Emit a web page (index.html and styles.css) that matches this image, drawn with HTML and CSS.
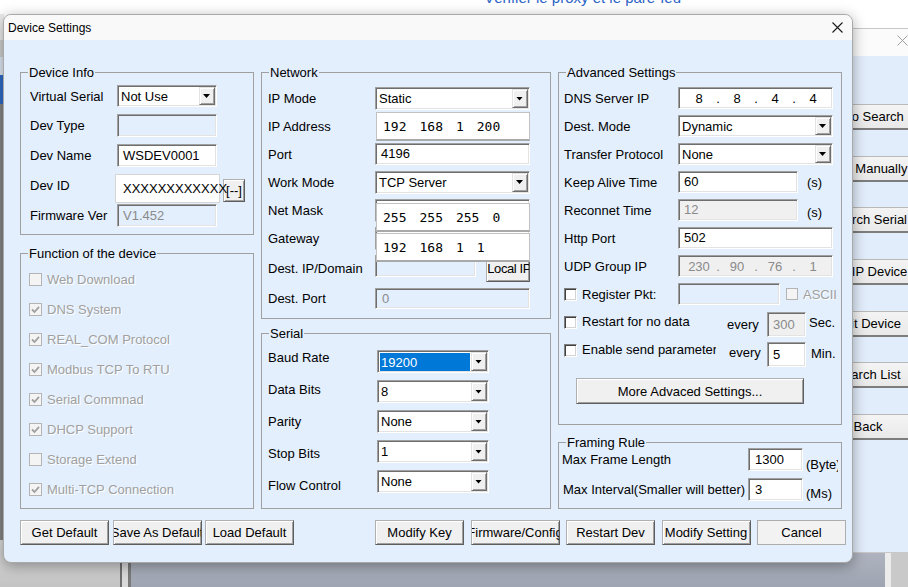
FILE: index.html
```html
<!DOCTYPE html>
<html>
<head>
<meta charset="utf-8">
<title>Device Settings</title>
<link rel="stylesheet" href="styles.css">
</head>
<body>
<div class="toplink"><span class="bullet">•</span>Vérifier le proxy et le pare-feu</div>

<div class="leftstrip"><div class="ls ls1"></div><div class="ls ls2"></div><div class="ls ls3"></div><div class="ls ls4"></div><div class="ls ls5"></div></div>

<div class="deskbottom">
  <div class="db-left"></div>
  <div class="db-frame"></div>
  <div class="db-mid"></div>
  <div class="db-right"></div>
</div>

<div class="bgwin">
  <div class="bgtitle"><svg class="bgclose" width="11" height="11" viewBox="0 0 11 11"><path d="M0.5 0.5 L10.5 10.5 M10.5 0.5 L0.5 10.5" stroke="#a0a0a0" stroke-width="1" fill="none"/></svg></div>
  <div class="bgbody">
    <div class="bgbtn">Auto Search</div>
    <div class="bgbtn">Add Manually</div>
    <div class="bgbtn">Search Serial</div>
    <div class="bgbtn">Set IP Device</div>
    <div class="bgbtn">Edit Device</div>
    <div class="bgbtn">Search List</div>
    <div class="bgbtn">Back</div>
  </div>
</div>

<div class="dialog">
  <div class="titlebar">
    <span class="title">Device Settings</span>
    <svg class="close" width="11" height="11" viewBox="0 0 11 11"><path d="M0.5 0.5 L10.5 10.5 M10.5 0.5 L0.5 10.5" stroke="#1a1a1a" stroke-width="1.1" fill="none"/></svg>
  </div>
  <div class="dbody">
    <div class="cols">
      <!-- column 1 -->
      <div class="col">
        <div class="group g-dev">
          <span class="legend">Device Info</span>
          <div class="dev-grid">
            <div class="lbl">Virtual Serial</div>
            <div class="select sel-dev"><span class="val">Not Use</span><span class="drop"></span></div>
            <div class="lbl">Dev Type</div>
            <div class="field dis fld-dev"></div>
            <div class="lbl">Dev Name</div>
            <div class="field fld-dev">WSDEV0001</div>
            <div class="lbl">Dev ID</div>
            <div class="devid-cell"><div class="devid">XXXXXXXXXXXX</div><div class="btn btn-small">[--]</div></div>
            <div class="lbl">Firmware Ver</div>
            <div class="field dis fld-dev"><span class="distext">V1.452</span></div>
          </div>
        </div>

        <div class="group g-func">
          <span class="legend">Function of the device</span>
          <div class="chkrow"><span class="cb dis"></span><span class="distxt">Web Download</span></div>
          <div class="chkrow"><span class="cb dis"><svg width="11" height="11" viewBox="0 0 11 11"><path d="M2 5.5 L4.5 8 L9 2.8" stroke="#a0a0a0" stroke-width="1.8" fill="none"/></svg></span><span class="distxt">DNS System</span></div>
          <div class="chkrow"><span class="cb dis"><svg width="11" height="11" viewBox="0 0 11 11"><path d="M2 5.5 L4.5 8 L9 2.8" stroke="#a0a0a0" stroke-width="1.8" fill="none"/></svg></span><span class="distxt">REAL_COM Protocol</span></div>
          <div class="chkrow"><span class="cb dis"><svg width="11" height="11" viewBox="0 0 11 11"><path d="M2 5.5 L4.5 8 L9 2.8" stroke="#a0a0a0" stroke-width="1.8" fill="none"/></svg></span><span class="distxt">Modbus TCP To RTU</span></div>
          <div class="chkrow"><span class="cb dis"><svg width="11" height="11" viewBox="0 0 11 11"><path d="M2 5.5 L4.5 8 L9 2.8" stroke="#a0a0a0" stroke-width="1.8" fill="none"/></svg></span><span class="distxt">Serial Commnad</span></div>
          <div class="chkrow"><span class="cb dis"><svg width="11" height="11" viewBox="0 0 11 11"><path d="M2 5.5 L4.5 8 L9 2.8" stroke="#a0a0a0" stroke-width="1.8" fill="none"/></svg></span><span class="distxt">DHCP Support</span></div>
          <div class="chkrow"><span class="cb dis"></span><span class="distxt">Storage Extend</span></div>
          <div class="chkrow"><span class="cb dis"><svg width="11" height="11" viewBox="0 0 11 11"><path d="M2 5.5 L4.5 8 L9 2.8" stroke="#a0a0a0" stroke-width="1.8" fill="none"/></svg></span><span class="distxt">Multi-TCP Connection</span></div>
        </div>
      </div>

      <!-- column 2 -->
      <div class="col">
        <div class="group g-net">
          <span class="legend">Network</span>
          <div class="net-grid">
            <div class="lbl">IP Mode</div>
            <div class="select sel-net"><span class="val">Static</span><span class="drop"></span></div>
            <div class="lbl">IP Address</div>
            <div class="ipbox ip-addr"><span>192</span><span>168</span><span>1</span><span>200</span></div>
            <div class="lbl">Port</div>
            <div class="field fld-port">4196</div>
            <div class="lbl">Work Mode</div>
            <div class="select sel-net"><span class="val">TCP Server</span><span class="drop"></span></div>
            <div class="lbl">Net Mask</div>
            <div class="field fld-net"></div>
            <div class="lbl">Gateway</div>
            <div class="field fld-net"></div>
            <div class="lbl">Dest. IP/Domain</div>
            <div class="destip-cell"><div class="field dis fld-destip"></div><div class="btn btn-localip">Local IP</div></div>
            <div class="lbl">Dest. Port</div>
            <div class="field dis fld-dport"><span class="distext">0</span></div>
          </div>
          <div class="ipbox ip-over ip-mask"><span>255</span><span>255</span><span>255</span><span>0</span></div>
          <div class="ipbox ip-over ip-gw"><span>192</span><span>168</span><span>1</span><span>1</span></div>
        </div>

        <div class="group g-ser">
          <span class="legend">Serial</span>
          <div class="ser-labels">
            <div>Baud Rate</div>
            <div>Data Bits</div>
            <div>Parity</div>
            <div>Stop Bits</div>
            <div>Flow Control</div>
          </div>
          <div class="ser-sels">
            <div class="select sel-ser"><span class="val hl">19200</span><span class="drop"></span></div>
            <div class="select sel-ser"><span class="val">8</span><span class="drop"></span></div>
            <div class="select sel-ser"><span class="val">None</span><span class="drop"></span></div>
            <div class="select sel-ser"><span class="val">1</span><span class="drop"></span></div>
            <div class="select sel-ser"><span class="val">None</span><span class="drop"></span></div>
          </div>
        </div>
      </div>

      <!-- column 3 -->
      <div class="col">
        <div class="group g-adv">
          <span class="legend">Advanced Settings</span>
          <div class="adv-grid">
            <div class="lbl">DNS Server IP</div>
            <div class="field ipf"><span>8</span><i>.</i><span>8</span><i>.</i><span>4</span><i>.</i><span>4</span></div>
            <div class="lbl">Dest. Mode</div>
            <div class="select sel-adv"><span class="val">Dynamic</span><span class="drop"></span></div>
            <div class="lbl">Transfer Protocol</div>
            <div class="select sel-adv"><span class="val">None</span><span class="drop"></span></div>
            <div class="lbl">Keep Alive Time</div>
            <div class="cell"><div class="field fld-ka">60</div><span class="unit">(s)</span></div>
            <div class="lbl">Reconnet Time</div>
            <div class="cell"><div class="field dis2 fld-ka"><span class="distext">12</span></div><span class="unit unit-low">(s)</span></div>
            <div class="lbl">Http Port</div>
            <div class="field fld-adv">502</div>
            <div class="lbl">UDP Group IP</div>
            <div class="field dis2 ipf gray"><span>230</span><i>.</i><span>90</span><i>.</i><span>76</span><i>.</i><span>1</span></div>
            <div class="lbl chklbl"><span class="cb"></span><span class="cbtext">Register Pkt:</span></div>
            <div class="cell cell-reg"><div class="field dis fld-reg"></div><span class="cb dis cb-small"></span><span class="distxt ascii">ASCII</span></div>
          </div>
          <div class="advrow">
            <span class="cb cb-row"></span>
            <span class="rowlbl rl-restart">Restart for no data</span>
            <span class="every ev1">every</span>
            <div class="field dis2 fld-every"><span class="distext">300</span></div>
            <span class="rowunit ru-sec">Sec.</span>
          </div>
          <div class="advrow">
            <span class="cb cb-row"></span>
            <span class="rowlbl rl-enable">Enable send parameter</span>
            <span class="every ev2">every</span>
            <div class="field fld-every fe2">5</div>
            <span class="rowunit ru-min">Min.</span>
          </div>
          <div class="btn btn-more">More Advaced Settings...</div>
        </div>

        <div class="group g-frm">
          <span class="legend">Framing Rule</span>
          <div class="frow">
            <div class="flbl">Max Frame Length</div>
            <div class="field fld-frm">1300</div>
            <span class="funit">(Byte)</span>
          </div>
          <div class="frow">
            <div class="flbl flbl2">Max Interval(Smaller will better)</div>
            <div class="field fld-frm">3</div>
            <span class="funit funit2">(Ms)</span>
          </div>
        </div>
      </div>
    </div>

    <div class="btnrow">
      <div class="btngroup left">
        <div class="btn btn-bottom">Get Default</div>
        <div class="btn btn-bottom">Save As Default</div>
        <div class="btn btn-bottom">Load Default</div>
      </div>
      <div class="btngroup right">
        <div class="btn btn-bottom">Modify Key</div>
        <div class="btn btn-bottom">Firmware/Config</div>
        <div class="btn btn-bottom">Restart Dev</div>
        <div class="btn btn-bottom">Modify Setting</div>
        <div class="btn btn-bottom btn-flat">Cancel</div>
      </div>
    </div>
  </div>
</div>
</body>
</html>
```

FILE: styles.css
```css
* { box-sizing: border-box; }

html, body {
  margin: 0;
  padding: 0;
}

body {
  width: 908px;
  height: 587px;
  overflow: hidden;
  position: relative;
  background: #ffffff;
  font-family: "Liberation Sans", Arial, sans-serif;
  font-size: 13px;
  color: #000;
}

/* ---------- desktop background ---------- */
.toplink {
  position: absolute;
  left: 467px;
  top: -11px;
  font-size: 15px;
  line-height: 18px;
  color: #2b63c6;
  white-space: nowrap;
}
.toplink .bullet { color: #333; margin-right: 12px; }

.leftstrip {
  position: absolute;
  left: 0;
  top: 14px;
  width: 4px;
  display: flex;
  flex-direction: column;
}
.ls1 { height: 26px; background: #ececec; }
.ls2 { height: 17px; background: #cfcfcf; }
.ls3 { height: 18px; background: #dfe8f4; }
.ls4 { height: 29px; background: #2f6dc8; }
.ls5 { height: 460px; background: #868686; }

.deskbottom {
  position: absolute;
  left: 0;
  top: 540px;
  width: 908px;
  height: 47px;
  display: flex;
}
.db-left { width: 120px; background: linear-gradient(#dcdcdc, #c3c3c3); }
.db-frame {
  width: 11px;
  background: #d9d9d9;
  border-left: 2px solid #6f6f6f;
  border-right: 3px solid #7a7a7a;
}
.db-mid { width: 754px; background: linear-gradient(#b4b9c4, #9ea4b1); }
.db-right {
  flex: 1;
  background: #c9c9c9;
  border-left: 6px solid #ececec;
}

.bgwin {
  position: absolute;
  left: 800px;
  top: 28px;
  width: 140px;
  height: 525px;
  border: 1px solid #c8c8c8;
  border-radius: 8px 8px 0 0;
  background: #e2edfb;
  overflow: hidden;
}
.bgtitle {
  height: 27px;
  background: #fbfbfb;
  position: relative;
}
.bgclose { position: absolute; left: 96px; top: 6px; }
.bgbody {
  display: flex;
  flex-direction: column;
  gap: 25.7px;
  padding: 48px 0 0 12px;
}
.bgbtn {
  width: 110px;
  height: 26px;
  background: linear-gradient(#f4f4f4, #e9e9e9);
  border: 1px solid #b9b9b9;
  border-bottom: 2px solid #7d7d7d;
  display: flex;
  align-items: center;
  justify-content: center;
  white-space: nowrap;
  font-size: 13px;
}

/* ---------- dialog ---------- */
.dialog {
  position: absolute;
  left: 3px;
  top: 14px;
  width: 850px;
  height: 549px;
  border: 1px solid #a9a9a9;
  border-radius: 8px;
  overflow: hidden;
  background: #e3effd;
  box-shadow: 0 3px 14px rgba(0, 0, 0, 0.35);
}
.titlebar {
  height: 25px;
  background: #f9f9f9;
  display: flex;
  align-items: center;
  justify-content: space-between;
  padding: 0 9px 0 4px;
}
.title { font-size: 12px; color: #000; }

.dbody { padding: 32px 0 0 16px; }

.cols {
  display: grid;
  grid-template-columns: 234px 290px 284px;
  column-gap: 7px;
}

.col { display: flex; flex-direction: column; }

.group {
  position: relative;
  border: 1px solid #a0a0a0;
}
.legend {
  position: absolute;
  top: -8px;
  left: 7px;
  padding: 0 1px;
  line-height: 15px;
  background: #e3effd;
  white-space: nowrap;
}

.lbl { white-space: nowrap; }

/* generic controls */
.field {
  height: 23px;
  background: #fff;
  border: 1px solid;
  border-color: #a0a0a0 #ffffff #ffffff #a0a0a0;
  box-shadow: inset 1px 1px 0 #6e6e6e, inset -1px -1px 0 #e3e3e3;
  line-height: 21px;
  padding-left: 5px;
  white-space: nowrap;
  overflow: hidden;
}
.field.dis { background: #e3effd; }
.field.dis2 { background: #f0f0f0; }
.distext { color: #8a8a8a; }

.select {
  display: flex;
  background: #fff;
  border: 1px solid;
  border-color: #a0a0a0 #ffffff #ffffff #a0a0a0;
  box-shadow: inset 1px 1px 0 #6e6e6e, inset -1px -1px 0 #e3e3e3;
  white-space: nowrap;
}
.select .val {
  flex: 1;
  padding-left: 3px;
  display: flex;
  align-items: center;
  overflow: hidden;
}
.select .val.hl {
  background: #0078d7;
  color: #fff;
  margin: 2px 1px 1px 2px;
  padding-left: 1px;
}
.drop {
  width: 16px;
  margin: 1px 1px 1px 0;
  background: #f0f0f0;
  border: 1px solid;
  border-color: #e3e3e3 #6e6e6e #6e6e6e #e3e3e3;
  box-shadow: inset 1px 1px 0 #fff, inset -1px -1px 0 #a0a0a0;
  position: relative;
}
.drop::after {
  content: "";
  position: absolute;
  left: 3px;
  top: 50%;
  margin-top: -2px;
  width: 7px;
  height: 4px;
  background: #000;
  clip-path: polygon(0 0, 100% 0, 50% 100%);
}

.btn {
  background: #f0f0f0;
  border: 1px solid;
  border-color: #b0b0b0 #5e5e5e #5e5e5e #b0b0b0;
  box-shadow: inset 1px 1px 0 #ffffff, inset -1px -1px 0 #a0a0a0;
  display: flex;
  align-items: center;
  justify-content: center;
  white-space: nowrap;
  overflow: hidden;
}

.cb {
  display: inline-flex;
  align-items: center;
  justify-content: center;
  width: 13px;
  height: 13px;
  flex: none;
  background: #fff;
  border: 1px solid;
  border-color: #808080 #ffffff #ffffff #808080;
  box-shadow: inset 1px 1px 0 #404040, inset -1px -1px 0 #d4d4d4;
}
.cb.dis {
  background: #f4f4f4;
  border: 1px solid #b4b4b4;
  box-shadow: none;
}
.distxt {
  color: #a0a0a0;
  text-shadow: 1px 1px 0 #ffffff;
  white-space: nowrap;
}

/* ---------- Device Info ---------- */
.g-dev {
  height: 163px;
  padding: 12px 0 0 9px;
}
.dev-grid {
  display: grid;
  grid-template-columns: 87px 100px;
  grid-template-rows: 29px 30px 30px 30px 30px;
  align-items: start;
}
.dev-grid .lbl { line-height: 23px; }
.sel-dev { width: 100px; height: 22px; }
.fld-dev { width: 100px; }
.devid-cell { display: flex; align-items: flex-start; }
.devid {
  width: 105px;
  height: 29px;
  margin-left: -2px;
  background: #fff;
  border: 1px solid #d6d6d6;
  line-height: 27px;
  padding-left: 7px;
  white-space: nowrap;
  position: relative;
  z-index: 1;
}
.btn-small {
  width: 22px;
  height: 23px;
  margin: 5px 0 0 3px;
  flex: none;
}

/* ---------- Function ---------- */
.g-func {
  margin-top: 18px;
  height: 256px;
  padding: 10px 0 0 8px;
}
.chkrow {
  height: 30px;
  display: flex;
  align-items: center;
}
.chkrow .distxt { margin-left: 5px; }

/* ---------- Network ---------- */
.g-net {
  height: 247px;
  padding: 11px 0 0 6px;
}
.net-grid {
  display: grid;
  grid-template-columns: 107px 155px;
  grid-template-rows: 29px 27px 28px 28px 28px 29px 31px 28px;
  align-items: center;
}
.sel-net { width: 155px; height: 23px; }
.ipbox {
  background: #fff;
  border: 1px solid #c2c2c2;
  border-bottom: 2px solid #a9a9a9;
  display: flex;
  align-items: center;
  gap: 13px;
  padding-left: 6px;
  font-family: "DejaVu Sans Mono", "Liberation Mono", monospace;
  font-size: 13px;
}
.ip-addr { width: 154px; height: 29px; margin-left: 1px; }
.fld-port { width: 155px; height: 22px; line-height: 20px; padding-left: 5px; }
.fld-net { width: 155px; }
.destip-cell {
  align-self: stretch;
  display: flex;
  align-items: flex-start;
}
.fld-destip { width: 113px; height: 22px; margin-top: 2px; }
.btn-localip {
  width: 49px;
  height: 28px;
  margin: 1px 0 0 10px;
  justify-content: flex-start;
  padding-left: 0;
  letter-spacing: -0.4px;
}
.fld-dport { width: 155px; height: 21px; line-height: 19px; padding-left: 6px; }
.ip-over {
  position: absolute;
  left: 114px;
  width: 154px;
  height: 29px;
}
.ip-mask { top: 130px; }
.ip-gw { top: 160px; }

/* ---------- Serial ---------- */
.g-ser {
  margin-top: 14px;
  height: 176px;
  padding: 16px 0 0 6px;
  display: flex;
}
.ser-labels {
  width: 109px;
  display: flex;
  flex-direction: column;
  gap: 16px;
}
.ser-labels div { line-height: 16px; white-space: nowrap; }
.ser-sels {
  display: flex;
  flex-direction: column;
  gap: 7px;
}
.sel-ser { width: 112px; height: 23px; }

/* ---------- Advanced ---------- */
.g-adv {
  height: 353px;
  padding: 11px 0 0 5px;
}
.adv-grid {
  display: grid;
  grid-template-columns: 114px 158px;
  grid-auto-rows: 28px;
  align-items: center;
}
.ipf {
  width: 155px;
  height: 22px;
  display: flex;
  padding-left: 5px;
}
.ipf span { width: 30px; text-align: center; }
.ipf i { width: 8px; text-align: center; font-style: normal; }
.ipf.gray { color: #8a8a8a; }
.sel-adv { width: 155px; height: 22px; }
.cell { display: flex; align-items: center; }
.fld-ka { width: 120px; height: 22px; line-height: 20px; }
.unit { margin-left: 9px; }
.unit-low { margin-top: 5px; }
.fld-adv { width: 155px; height: 22px; line-height: 20px; }
.chklbl { display: flex; align-items: center; }
.cbtext { margin-left: 5px; }
.cell-reg { overflow: hidden; }
.fld-reg { width: 102px; height: 22px; flex: none; }
.cb-small { width: 12px; height: 12px; margin-left: 6px; }
.ascii { margin-left: 5px; }

.advrow {
  height: 28px;
  display: flex;
  align-items: flex-start;
}
.cb-row { margin-top: 8px; }
.rowlbl {
  line-height: 28px;
  margin-left: 5px;
  white-space: nowrap;
  overflow: hidden;
}
.rl-restart { width: 145px; }
.rl-enable { width: 134px; }
.every { line-height: 28px; margin-top: 3px; }
.ev1 { width: 40px; }
.ev2 { width: 38px; margin-left: 13px; }
.fld-every {
  width: 39px;
  height: 25px;
  line-height: 23px;
  margin-top: 4px;
  padding-left: 5px;
}
.fe2 { margin-top: 6px; }
.rowunit { line-height: 28px; }
.ru-sec { margin: 1px 0 0 3px; }
.ru-min { margin: 4px 0 0 5px; }

.btn-more {
  width: 228px;
  height: 26px;
  margin: 14px 0 0 12px;
}

/* ---------- Framing ---------- */
.g-frm {
  margin-top: 17px;
  height: 67px;
  padding: 5px 0 0 3px;
}
.frow {
  height: 30px;
  display: flex;
  align-items: flex-start;
}
.flbl { width: 186px; line-height: 23px; white-space: nowrap; }
.flbl2 { padding-left: 1px; }
.fld-frm { width: 55px; padding-left: 6px; }
.funit {
  width: 32px;
  margin: 5px 0 0 3px;
  line-height: 23px;
  overflow: hidden;
  white-space: nowrap;
}
.funit2 { margin-top: 4px; }

/* ---------- bottom buttons ---------- */
.btnrow {
  display: flex;
  margin-top: 11px;
}
.btngroup { display: flex; }
.btngroup.left { gap: 3.5px; }
.btngroup.right { gap: 6.5px; margin-left: 81px; }
.btn-bottom { width: 89px; height: 25px; }
.btn-flat {
  border: 1px solid #adadad;
  box-shadow: none;
  background: #f2f2f2;
}
```
